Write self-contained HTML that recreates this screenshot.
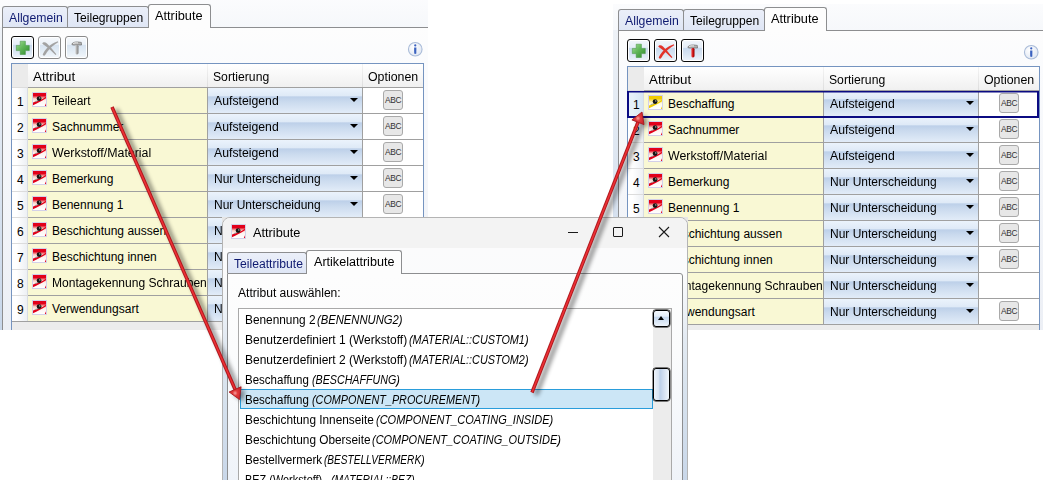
<!DOCTYPE html><html><head><meta charset="utf-8"><style>
*{margin:0;padding:0;box-sizing:border-box}
html,body{width:1043px;height:480px;overflow:hidden;background:#fff;font-family:"Liberation Sans", sans-serif;font-size:12px;color:#000}
.abs{position:absolute}
.crop{position:absolute;overflow:hidden}
.inner{position:absolute;width:440px;height:360px}
.topbg{background:linear-gradient(#fdfdfe,#f6f8fb)}
.leftbg{background:linear-gradient(#eef2f7,#c8d7ea 300px)}
.content{background:linear-gradient(#fdfdfd 0,#fafbfd 40px,#eceff5 300px);border-left:1px solid #8d8e90;border-top:1px solid #8d8e90}
.tab{background:linear-gradient(#ebeff9,#dfe6f5);border:1px solid #8d8e90;border-bottom:none;border-radius:3px 3px 0 0}
.tabsel{background:#fdfdfd;border:1px solid #8d8e90;border-bottom:none;border-radius:3px 3px 0 0}
.tabsel2{background:#fdfdfd}
.tt,.tx{position:absolute;white-space:nowrap;font-size:12px;line-height:14px;color:#000}
.navy{color:#0f1a70}
.ic{position:absolute}
.btn{width:23px;height:23px;border:1px solid #0a0a0a;border-radius:3px;box-shadow:inset 0 0 0 1px #fff;background:linear-gradient(#f2f6fb 0%,#e6eef8 35%,#c9daee 40%,#d9e5f3 70%,#eef4fb 100%)}
.btn.dis{border:1px solid #8a8a8a;background:linear-gradient(#f6f9fc 0%,#ecf2f9 35%,#d8e4f1 40%,#e4edf6 70%,#f3f7fb 100%)}
.gridbox{border:1px solid #7594c0;background:#fff}
.hdrnum{background:#ebebeb}
.hdr{background:linear-gradient(#ffffff,#f0f0f0)}
.hsep{background:linear-gradient(#f4f4f4,#dedede)}
.hline{background:#a0a0a0}
.hline2{background:#dcdcdc}
.num{background:linear-gradient(90deg,#ffffff 30%,#edf0f4 100%)}
.numsel{background:linear-gradient(90deg,#e6f0f9 30%,#d6e5f3 100%)}
.vsep{background:#a0a0a0}
.vsep2{background:#d8dce2}
.yel{background:#f9f8d4}
.blu{background:linear-gradient(#ebf3fc 0%,#dfeaf7 30%,#bdd0e9 36%,#cadaee 55%,#e2ecf8 100%)}
.wht{background:#fff}
.arr{width:0;height:0;border-left:4px solid transparent;border-right:4px solid transparent;border-top:4px solid #000}
.abc{width:20px;height:20px;border:1px solid #a9a9a9;border-radius:3px;background:#e7e7e7}
.abc span{position:absolute;left:1px;top:4px;font-size:8.4px;line-height:10px;color:#333;letter-spacing:-0.3px}
.bottomgray{background:#ececec}
.selbox{border:2px solid #0b0b82;border-top-width:1px;box-shadow:inset 0 1px 0 rgba(11,11,130,0.5)}
.dshadow{background:#e6e6e6}
.dlg{background:#f9fafc;border:1px solid #b4b4b4;border-radius:8px 8px 0 0;overflow:hidden}
.dtitle{background:#f3f3f3}
.dbody{background:linear-gradient(#fbfbfc 0,#fafbfc 30px,#e3eaf2 90px,#dae4ee 130px,#c9d7e9 233px)}
.tpanel{background:linear-gradient(#fdfdfd 0,#fbfcfd 80px,#eff3f9 207px);border:1px solid #8d8e90;border-radius:0 3px 0 0}
.lbox{background:#fff;border:1px solid #a9a9a9}
.lsel{background:#cce6f6;border:1px solid #2a9ddb}
.strack{background:#ececec}
.sbtn{border:1px solid #000;border-radius:3px;box-shadow:0 0 0 0.4px #000;background:linear-gradient(#f4f8fd 0%,#e3edf8 35%,#c5d7ee 42%,#d8e5f4 70%,#eef4fb 100%)}
.uparr{position:absolute;left:4px;top:5px;width:0;height:0;border-left:3.5px solid transparent;border-right:3.5px solid transparent;border-bottom:4px solid #000}
.sthumb{border:1px solid #000;border-radius:3px;box-shadow:0 0 0 0.4px #000;background:linear-gradient(90deg,#eef4fb 0%,#d8e4f3 30%,#bdd0e9 40%,#cfdcef 60%,#e6eef8 88%,#f4f8fc 100%)}
</style></head><body><svg width="0" height="0" style="position:absolute"><defs>
<linearGradient id="gr_e2001a" x1="0" y1="0" x2="0" y2="1">
<stop offset="0" stop-color="#e2001a"/><stop offset="0.2" stop-color="#e2001a"/>
<stop offset="0.42" stop-color="#f9c9bf"/><stop offset="0.6" stop-color="#fdf1ee"/><stop offset="1" stop-color="#ffffff"/></linearGradient>
<symbol id="ico_e2001a" viewBox="0 0 15 15">
<rect x="0" y="0" width="15" height="15" fill="#d3d0e8"/>
<rect x="1" y="1" width="13" height="13" fill="url(#gr_e2001a)"/>
<path d="M1 10.6 C5 9.6 10 7.6 14 4.8 L14 6.3 C10 9 5 11.6 1 13.2 Z" fill="#e2001a"/>
<path d="M12.8 14 L14 11.2 L14 14 Z" fill="#e2001a"/>
<path d="M2.6 9.6 L8.5 8.0" stroke="#777" stroke-width="0.6"/>
<circle cx="7.1" cy="6.6" r="2.4" fill="#141414"/>
<circle cx="7.8" cy="5.9" r="0.7" fill="#d0d0d0"/>
</symbol>
<linearGradient id="gr_f0cc00" x1="0" y1="0" x2="0" y2="1">
<stop offset="0" stop-color="#f0cc00"/><stop offset="0.2" stop-color="#f0cc00"/>
<stop offset="0.42" stop-color="#fbe9a0"/><stop offset="0.6" stop-color="#fffbe8"/><stop offset="1" stop-color="#ffffff"/></linearGradient>
<symbol id="ico_f0cc00" viewBox="0 0 15 15">
<rect x="0" y="0" width="15" height="15" fill="#d3d0e8"/>
<rect x="1" y="1" width="13" height="13" fill="url(#gr_f0cc00)"/>
<path d="M1 10.6 C5 9.6 10 7.6 14 4.8 L14 6.3 C10 9 5 11.6 1 13.2 Z" fill="#f0cc00"/>
<path d="M12.8 14 L14 11.2 L14 14 Z" fill="#f0cc00"/>
<path d="M2.6 9.6 L8.5 8.0" stroke="#777" stroke-width="0.6"/>
<circle cx="7.1" cy="6.6" r="2.4" fill="#141414"/>
<circle cx="7.8" cy="5.9" r="0.7" fill="#d0d0d0"/>
</symbol>
<linearGradient id="pg" x1="0" y1="0" x2="1" y2="1"><stop offset="0" stop-color="#a6dc98"/><stop offset="0.45" stop-color="#62b85a"/><stop offset="1" stop-color="#2f8a2d"/></linearGradient>
<radialGradient id="ig" cx="0.4" cy="0.35" r="0.7"><stop offset="0" stop-color="#ffffff"/><stop offset="1" stop-color="#dfe6f2"/></radialGradient>
</defs></svg>
<div class="crop" style="left:0px;top:0px;width:428px;height:330px">
<div class="inner" style="left:0px;top:0px">
<div class="abs topbg" style="left:-10px;top:-10px;width:460px;height:37px"></div>
<div class="abs leftbg" style="left:-10px;top:27px;width:12px;height:340px"></div>
<div class="abs content" style="left:2px;top:27px;width:440px;height:320px"></div>
<div class="abs tab" style="left:2px;top:6px;width:66px;height:21px"></div>
<span class="tt navy" style="left:9px;top:11px;transform:scaleX(1.0208);transform-origin:0 0">Allgemein</span>
<div class="abs tab" style="left:67px;top:6px;width:82px;height:21px"></div>
<span class="tt" style="left:74px;top:11px;transform:scaleX(1.0070);transform-origin:0 0">Teilegruppen</span>
<div class="abs tabsel" style="left:148px;top:4px;width:63px;height:24px"></div>
<span class="tt" style="left:155px;top:9px;transform:scaleX(1.0648);transform-origin:0 0">Attribute</span>
<div class="abs btn" style="left:11px;top:36px"><svg width="23" height="23" viewBox="0 0 23 23" style="position:absolute;left:-1px;top:-1px"><path d="M9.2 5.2 H14.4 V9.4 H18.3 V14.6 H14.4 V18.5 H9.2 V14.6 H5.3 V9.4 H9.2 Z" fill="url(#pg)" stroke="#3f8f3c" stroke-width="0.5" stroke-linejoin="round"/></svg></div><div class="abs btn dis" style="left:38px;top:36px"><svg width="23" height="23" viewBox="0 0 23 23" style="position:absolute;left:-1px;top:-1px"><path d="M4.2 7.6 C5 5.8 7 5.6 9 7.5 C12 10.5 15.5 14.5 18.4 18.2 L17.6 19 C14.5 16 11 12.5 7.5 10 C6 9 5 8.5 4.2 7.6 Z" fill="#a3a3a3"/><path d="M19.8 5.2 L20.2 6.2 C16 8.5 12 12 9.5 15.5 C8.5 17 7.5 18.5 6.8 19.5 C5.8 20 4.6 19.3 4.8 18.3 C6.5 14.5 9.5 11 12.5 9 C15 7.2 17.5 6 19.8 5.2 Z" fill="#a3a3a3"/></svg></div><div class="abs btn dis" style="left:65px;top:36px"><svg width="23" height="23" viewBox="0 0 23 23" style="position:absolute;left:-1px;top:-1px"><defs><linearGradient id="hgr" x1="0" y1="0" x2="1" y2="0"><stop offset="0" stop-color="#d8d8d8"/><stop offset="0.5" stop-color="#a8a8a8"/><stop offset="1" stop-color="#808080"/></linearGradient></defs><path d="M6.8 8.4 C7.3 6.4 10 5.8 13 6 L16.3 6.4 L16.5 9 L13 8.9 L9.5 9.1 C8.3 9.1 7.4 9 6.8 8.4 Z" fill="#b4b4b4" stroke="#5c5c5c" stroke-width="0.6"/><path d="M8 7.6 C9 6.8 11 6.7 13 6.9" stroke="#fff" stroke-width="0.8" fill="none"/><rect x="10.3" y="8.9" width="3.2" height="9.6" rx="1.4" fill="url(#hgr)"/></svg></div>
<svg class="abs" style="left:407px;top:41px" width="16" height="16" viewBox="0 0 16 16"><circle cx="8.25" cy="8.25" r="6.8" fill="url(#ig)" stroke="#a9bbd8" stroke-width="1.1"/><circle cx="8.25" cy="4.4" r="1.1" fill="#3b62c0"/><path d="M7.1 6.4 H9.4 L9.3 12.6 Q8.25 13.2 7.2 12.6 Z" fill="#3b62c0"/></svg>
<div class="abs gridbox" style="left:11px;top:63px;width:413px;height:300px"></div>
<div class="abs hdrnum" style="left:12px;top:64px;width:16px;height:23px"></div>
<div class="abs hdr" style="left:28px;top:64px;width:395px;height:23px"></div>
<div class="abs hsep" style="left:207px;top:64px;width:1px;height:23px"></div>
<div class="abs hsep" style="left:362px;top:64px;width:1px;height:23px"></div>
<span class="tx" style="left:33px;top:70px;transform:scaleX(1.1101);transform-origin:0 0">Attribut</span>
<span class="tx" style="left:213px;top:70px;transform:scaleX(1.0149);transform-origin:0 0">Sortierung</span>
<span class="tx" style="left:368px;top:70px;transform:scaleX(1.0307);transform-origin:0 0">Optionen</span>
<div class="abs hline" style="left:28px;top:87px;width:395px;height:1px"></div>
<div class="abs hline2" style="left:12px;top:87px;width:16px;height:1px"></div>
<div class="abs num" style="left:12px;top:88px;width:15px;height:25px"></div>
<div class="abs vsep2" style="left:27px;top:88px;width:1px;height:25px"></div>
<span class="tx" style="left:17px;top:95px">1</span>
<div class="abs yel" style="left:28px;top:88px;width:179px;height:25px"></div>
<div class="abs vsep" style="left:207px;top:88px;width:1px;height:25px"></div>
<div class="abs blu" style="left:208px;top:88px;width:154px;height:25px"></div>
<div class="abs vsep" style="left:362px;top:88px;width:1px;height:25px"></div>
<div class="abs wht" style="left:363px;top:88px;width:60px;height:25px"></div>
<svg class="ic" style="left:32px;top:92px" width="15" height="15" viewBox="0 0 15 15"><use href="#ico_e2001a"/></svg>
<span class="tx" style="left:52px;top:94px;transform:scaleX(1.0003);transform-origin:0 0">Teileart</span>
<span class="tx" style="left:214px;top:94px;transform:scaleX(1.0207);transform-origin:0 0">Aufsteigend</span>
<div class="abs arr" style="left:350px;top:98px"></div>
<div class="abs abc" style="left:383px;top:90px"><span>ABC</span></div>
<div class="abs hline" style="left:28px;top:113px;width:395px;height:1px"></div>
<div class="abs hline2" style="left:12px;top:113px;width:16px;height:1px"></div>
<div class="abs num" style="left:12px;top:114px;width:15px;height:25px"></div>
<div class="abs vsep2" style="left:27px;top:114px;width:1px;height:25px"></div>
<span class="tx" style="left:17px;top:121px">2</span>
<div class="abs yel" style="left:28px;top:114px;width:179px;height:25px"></div>
<div class="abs vsep" style="left:207px;top:114px;width:1px;height:25px"></div>
<div class="abs blu" style="left:208px;top:114px;width:154px;height:25px"></div>
<div class="abs vsep" style="left:362px;top:114px;width:1px;height:25px"></div>
<div class="abs wht" style="left:363px;top:114px;width:60px;height:25px"></div>
<svg class="ic" style="left:32px;top:118px" width="15" height="15" viewBox="0 0 15 15"><use href="#ico_e2001a"/></svg>
<span class="tx" style="left:52px;top:120px">Sachnummer</span>
<span class="tx" style="left:214px;top:120px;transform:scaleX(1.0207);transform-origin:0 0">Aufsteigend</span>
<div class="abs arr" style="left:350px;top:124px"></div>
<div class="abs abc" style="left:383px;top:116px"><span>ABC</span></div>
<div class="abs hline" style="left:28px;top:139px;width:395px;height:1px"></div>
<div class="abs hline2" style="left:12px;top:139px;width:16px;height:1px"></div>
<div class="abs num" style="left:12px;top:140px;width:15px;height:25px"></div>
<div class="abs vsep2" style="left:27px;top:140px;width:1px;height:25px"></div>
<span class="tx" style="left:17px;top:147px">3</span>
<div class="abs yel" style="left:28px;top:140px;width:179px;height:25px"></div>
<div class="abs vsep" style="left:207px;top:140px;width:1px;height:25px"></div>
<div class="abs blu" style="left:208px;top:140px;width:154px;height:25px"></div>
<div class="abs vsep" style="left:362px;top:140px;width:1px;height:25px"></div>
<div class="abs wht" style="left:363px;top:140px;width:60px;height:25px"></div>
<svg class="ic" style="left:32px;top:144px" width="15" height="15" viewBox="0 0 15 15"><use href="#ico_e2001a"/></svg>
<span class="tx" style="left:52px;top:146px;transform:scaleX(1.0305);transform-origin:0 0">Werkstoff/Material</span>
<span class="tx" style="left:214px;top:146px;transform:scaleX(1.0207);transform-origin:0 0">Aufsteigend</span>
<div class="abs arr" style="left:350px;top:150px"></div>
<div class="abs abc" style="left:383px;top:142px"><span>ABC</span></div>
<div class="abs hline" style="left:28px;top:165px;width:395px;height:1px"></div>
<div class="abs hline2" style="left:12px;top:165px;width:16px;height:1px"></div>
<div class="abs num" style="left:12px;top:166px;width:15px;height:25px"></div>
<div class="abs vsep2" style="left:27px;top:166px;width:1px;height:25px"></div>
<span class="tx" style="left:17px;top:173px">4</span>
<div class="abs yel" style="left:28px;top:166px;width:179px;height:25px"></div>
<div class="abs vsep" style="left:207px;top:166px;width:1px;height:25px"></div>
<div class="abs blu" style="left:208px;top:166px;width:154px;height:25px"></div>
<div class="abs vsep" style="left:362px;top:166px;width:1px;height:25px"></div>
<div class="abs wht" style="left:363px;top:166px;width:60px;height:25px"></div>
<svg class="ic" style="left:32px;top:170px" width="15" height="15" viewBox="0 0 15 15"><use href="#ico_e2001a"/></svg>
<span class="tx" style="left:52px;top:172px">Bemerkung</span>
<span class="tx" style="left:214px;top:172px;transform:scaleX(0.9997);transform-origin:0 0">Nur Unterscheidung</span>
<div class="abs arr" style="left:350px;top:176px"></div>
<div class="abs abc" style="left:383px;top:168px"><span>ABC</span></div>
<div class="abs hline" style="left:28px;top:191px;width:395px;height:1px"></div>
<div class="abs hline2" style="left:12px;top:191px;width:16px;height:1px"></div>
<div class="abs num" style="left:12px;top:192px;width:15px;height:25px"></div>
<div class="abs vsep2" style="left:27px;top:192px;width:1px;height:25px"></div>
<span class="tx" style="left:17px;top:199px">5</span>
<div class="abs yel" style="left:28px;top:192px;width:179px;height:25px"></div>
<div class="abs vsep" style="left:207px;top:192px;width:1px;height:25px"></div>
<div class="abs blu" style="left:208px;top:192px;width:154px;height:25px"></div>
<div class="abs vsep" style="left:362px;top:192px;width:1px;height:25px"></div>
<div class="abs wht" style="left:363px;top:192px;width:60px;height:25px"></div>
<svg class="ic" style="left:32px;top:196px" width="15" height="15" viewBox="0 0 15 15"><use href="#ico_e2001a"/></svg>
<span class="tx" style="left:52px;top:198px">Benennung 1</span>
<span class="tx" style="left:214px;top:198px;transform:scaleX(0.9997);transform-origin:0 0">Nur Unterscheidung</span>
<div class="abs arr" style="left:350px;top:202px"></div>
<div class="abs abc" style="left:383px;top:194px"><span>ABC</span></div>
<div class="abs hline" style="left:28px;top:217px;width:395px;height:1px"></div>
<div class="abs hline2" style="left:12px;top:217px;width:16px;height:1px"></div>
<div class="abs num" style="left:12px;top:218px;width:15px;height:25px"></div>
<div class="abs vsep2" style="left:27px;top:218px;width:1px;height:25px"></div>
<span class="tx" style="left:17px;top:225px">6</span>
<div class="abs yel" style="left:28px;top:218px;width:179px;height:25px"></div>
<div class="abs vsep" style="left:207px;top:218px;width:1px;height:25px"></div>
<div class="abs blu" style="left:208px;top:218px;width:154px;height:25px"></div>
<div class="abs vsep" style="left:362px;top:218px;width:1px;height:25px"></div>
<div class="abs wht" style="left:363px;top:218px;width:60px;height:25px"></div>
<svg class="ic" style="left:32px;top:222px" width="15" height="15" viewBox="0 0 15 15"><use href="#ico_e2001a"/></svg>
<span class="tx" style="left:52px;top:224px">Beschichtung aussen</span>
<span class="tx" style="left:214px;top:224px;transform:scaleX(0.9997);transform-origin:0 0">Nur Unterscheidung</span>
<div class="abs arr" style="left:350px;top:228px"></div>
<div class="abs abc" style="left:383px;top:220px"><span>ABC</span></div>
<div class="abs hline" style="left:28px;top:243px;width:395px;height:1px"></div>
<div class="abs hline2" style="left:12px;top:243px;width:16px;height:1px"></div>
<div class="abs num" style="left:12px;top:244px;width:15px;height:25px"></div>
<div class="abs vsep2" style="left:27px;top:244px;width:1px;height:25px"></div>
<span class="tx" style="left:17px;top:251px">7</span>
<div class="abs yel" style="left:28px;top:244px;width:179px;height:25px"></div>
<div class="abs vsep" style="left:207px;top:244px;width:1px;height:25px"></div>
<div class="abs blu" style="left:208px;top:244px;width:154px;height:25px"></div>
<div class="abs vsep" style="left:362px;top:244px;width:1px;height:25px"></div>
<div class="abs wht" style="left:363px;top:244px;width:60px;height:25px"></div>
<svg class="ic" style="left:32px;top:248px" width="15" height="15" viewBox="0 0 15 15"><use href="#ico_e2001a"/></svg>
<span class="tx" style="left:52px;top:250px">Beschichtung innen</span>
<span class="tx" style="left:214px;top:250px;transform:scaleX(0.9997);transform-origin:0 0">Nur Unterscheidung</span>
<div class="abs arr" style="left:350px;top:254px"></div>
<div class="abs abc" style="left:383px;top:246px"><span>ABC</span></div>
<div class="abs hline" style="left:28px;top:269px;width:395px;height:1px"></div>
<div class="abs hline2" style="left:12px;top:269px;width:16px;height:1px"></div>
<div class="abs num" style="left:12px;top:270px;width:15px;height:25px"></div>
<div class="abs vsep2" style="left:27px;top:270px;width:1px;height:25px"></div>
<span class="tx" style="left:17px;top:277px">8</span>
<div class="abs yel" style="left:28px;top:270px;width:179px;height:25px"></div>
<div class="abs vsep" style="left:207px;top:270px;width:1px;height:25px"></div>
<div class="abs blu" style="left:208px;top:270px;width:154px;height:25px"></div>
<div class="abs vsep" style="left:362px;top:270px;width:1px;height:25px"></div>
<div class="abs wht" style="left:363px;top:270px;width:60px;height:25px"></div>
<svg class="ic" style="left:32px;top:274px" width="15" height="15" viewBox="0 0 15 15"><use href="#ico_e2001a"/></svg>
<span class="tx" style="left:52px;top:276px;transform:scaleX(1.0044);transform-origin:0 0">Montagekennung Schrauben</span>
<span class="tx" style="left:214px;top:276px;transform:scaleX(0.9997);transform-origin:0 0">Nur Unterscheidung</span>
<div class="abs arr" style="left:350px;top:280px"></div>
<div class="abs abc" style="left:383px;top:272px"><span>ABC</span></div>
<div class="abs hline" style="left:28px;top:295px;width:395px;height:1px"></div>
<div class="abs hline2" style="left:12px;top:295px;width:16px;height:1px"></div>
<div class="abs num" style="left:12px;top:296px;width:15px;height:25px"></div>
<div class="abs vsep2" style="left:27px;top:296px;width:1px;height:25px"></div>
<span class="tx" style="left:17px;top:303px">9</span>
<div class="abs yel" style="left:28px;top:296px;width:179px;height:25px"></div>
<div class="abs vsep" style="left:207px;top:296px;width:1px;height:25px"></div>
<div class="abs blu" style="left:208px;top:296px;width:154px;height:25px"></div>
<div class="abs vsep" style="left:362px;top:296px;width:1px;height:25px"></div>
<div class="abs wht" style="left:363px;top:296px;width:60px;height:25px"></div>
<svg class="ic" style="left:32px;top:300px" width="15" height="15" viewBox="0 0 15 15"><use href="#ico_e2001a"/></svg>
<span class="tx" style="left:52px;top:302px">Verwendungsart</span>
<span class="tx" style="left:214px;top:302px;transform:scaleX(0.9997);transform-origin:0 0">Nur Unterscheidung</span>
<div class="abs arr" style="left:350px;top:306px"></div>
<div class="abs abc" style="left:383px;top:298px"><span>ABC</span></div>
<div class="abs hline" style="left:12px;top:321px;width:411px;height:1px"></div>
<div class="abs bottomgray" style="left:12px;top:322px;width:411px;height:40px"></div>
</div></div>
<div class="crop" style="left:613px;top:4px;width:430px;height:326px">
<div class="inner" style="left:3px;top:-1px">
<div class="abs topbg" style="left:-10px;top:-10px;width:460px;height:37px"></div>
<div class="abs leftbg" style="left:-10px;top:27px;width:12px;height:340px"></div>
<div class="abs content" style="left:2px;top:27px;width:440px;height:320px"></div>
<div class="abs tab" style="left:2px;top:6px;width:66px;height:21px"></div>
<span class="tt navy" style="left:9px;top:11px;transform:scaleX(1.0208);transform-origin:0 0">Allgemein</span>
<div class="abs tab" style="left:67px;top:6px;width:82px;height:21px"></div>
<span class="tt" style="left:74px;top:11px;transform:scaleX(1.0070);transform-origin:0 0">Teilegruppen</span>
<div class="abs tabsel" style="left:148px;top:4px;width:63px;height:24px"></div>
<span class="tt" style="left:155px;top:9px;transform:scaleX(1.0648);transform-origin:0 0">Attribute</span>
<div class="abs btn" style="left:11px;top:36px"><svg width="23" height="23" viewBox="0 0 23 23" style="position:absolute;left:-1px;top:-1px"><path d="M9.2 5.2 H14.4 V9.4 H18.3 V14.6 H14.4 V18.5 H9.2 V14.6 H5.3 V9.4 H9.2 Z" fill="url(#pg)" stroke="#3f8f3c" stroke-width="0.5" stroke-linejoin="round"/></svg></div><div class="abs btn" style="left:38px;top:36px"><svg width="23" height="23" viewBox="0 0 23 23" style="position:absolute;left:-1px;top:-1px"><path d="M4.2 7.6 C5 5.8 7 5.6 9 7.5 C12 10.5 15.5 14.5 18.4 18.2 L17.6 19 C14.5 16 11 12.5 7.5 10 C6 9 5 8.5 4.2 7.6 Z" fill="#e2332b"/><path d="M19.8 5.2 L20.2 6.2 C16 8.5 12 12 9.5 15.5 C8.5 17 7.5 18.5 6.8 19.5 C5.8 20 4.6 19.3 4.8 18.3 C6.5 14.5 9.5 11 12.5 9 C15 7.2 17.5 6 19.8 5.2 Z" fill="#e2332b"/></svg></div><div class="abs btn" style="left:65px;top:36px"><svg width="23" height="23" viewBox="0 0 23 23" style="position:absolute;left:-1px;top:-1px"><defs><linearGradient id="hr" x1="0" y1="0" x2="1" y2="0"><stop offset="0" stop-color="#f06060"/><stop offset="0.5" stop-color="#d01010"/><stop offset="1" stop-color="#900000"/></linearGradient></defs><path d="M6.8 8.4 C7.3 6.4 10 5.8 13 6 L16.3 6.4 L16.5 9 L13 8.9 L9.5 9.1 C8.3 9.1 7.4 9 6.8 8.4 Z" fill="#b4b4b4" stroke="#5c5c5c" stroke-width="0.6"/><path d="M8 7.6 C9 6.8 11 6.7 13 6.9" stroke="#fff" stroke-width="0.8" fill="none"/><rect x="10.3" y="8.9" width="3.2" height="9.6" rx="1.4" fill="url(#hr)"/></svg></div>
<svg class="abs" style="left:407px;top:41px" width="16" height="16" viewBox="0 0 16 16"><circle cx="8.25" cy="8.25" r="6.8" fill="url(#ig)" stroke="#a9bbd8" stroke-width="1.1"/><circle cx="8.25" cy="4.4" r="1.1" fill="#3b62c0"/><path d="M7.1 6.4 H9.4 L9.3 12.6 Q8.25 13.2 7.2 12.6 Z" fill="#3b62c0"/></svg>
<div class="abs gridbox" style="left:11px;top:63px;width:413px;height:300px"></div>
<div class="abs hdrnum" style="left:12px;top:64px;width:16px;height:23px"></div>
<div class="abs hdr" style="left:28px;top:64px;width:395px;height:23px"></div>
<div class="abs hsep" style="left:207px;top:64px;width:1px;height:23px"></div>
<div class="abs hsep" style="left:362px;top:64px;width:1px;height:23px"></div>
<span class="tx" style="left:33px;top:70px;transform:scaleX(1.1101);transform-origin:0 0">Attribut</span>
<span class="tx" style="left:213px;top:70px;transform:scaleX(1.0149);transform-origin:0 0">Sortierung</span>
<span class="tx" style="left:368px;top:70px;transform:scaleX(1.0307);transform-origin:0 0">Optionen</span>
<div class="abs hline" style="left:28px;top:87px;width:395px;height:1px"></div>
<div class="abs hline2" style="left:12px;top:87px;width:16px;height:1px"></div>
<div class="abs numsel" style="left:12px;top:88px;width:15px;height:25px"></div>
<div class="abs vsep2" style="left:27px;top:88px;width:1px;height:25px"></div>
<span class="tx" style="left:17px;top:95px">1</span>
<div class="abs yel" style="left:28px;top:88px;width:179px;height:25px"></div>
<div class="abs vsep" style="left:207px;top:88px;width:1px;height:25px"></div>
<div class="abs blu" style="left:208px;top:88px;width:154px;height:25px"></div>
<div class="abs vsep" style="left:362px;top:88px;width:1px;height:25px"></div>
<div class="abs wht" style="left:363px;top:88px;width:60px;height:25px"></div>
<svg class="ic" style="left:32px;top:92px" width="15" height="15" viewBox="0 0 15 15"><use href="#ico_f0cc00"/></svg>
<span class="tx" style="left:52px;top:94px">Beschaffung</span>
<span class="tx" style="left:214px;top:94px;transform:scaleX(1.0207);transform-origin:0 0">Aufsteigend</span>
<div class="abs arr" style="left:350px;top:98px"></div>
<div class="abs abc" style="left:383px;top:90px"><span>ABC</span></div>
<div class="abs hline" style="left:28px;top:113px;width:395px;height:1px"></div>
<div class="abs hline2" style="left:12px;top:113px;width:16px;height:1px"></div>
<div class="abs num" style="left:12px;top:114px;width:15px;height:25px"></div>
<div class="abs vsep2" style="left:27px;top:114px;width:1px;height:25px"></div>
<span class="tx" style="left:17px;top:121px">2</span>
<div class="abs yel" style="left:28px;top:114px;width:179px;height:25px"></div>
<div class="abs vsep" style="left:207px;top:114px;width:1px;height:25px"></div>
<div class="abs blu" style="left:208px;top:114px;width:154px;height:25px"></div>
<div class="abs vsep" style="left:362px;top:114px;width:1px;height:25px"></div>
<div class="abs wht" style="left:363px;top:114px;width:60px;height:25px"></div>
<svg class="ic" style="left:32px;top:118px" width="15" height="15" viewBox="0 0 15 15"><use href="#ico_e2001a"/></svg>
<span class="tx" style="left:52px;top:120px">Sachnummer</span>
<span class="tx" style="left:214px;top:120px;transform:scaleX(1.0207);transform-origin:0 0">Aufsteigend</span>
<div class="abs arr" style="left:350px;top:124px"></div>
<div class="abs abc" style="left:383px;top:116px"><span>ABC</span></div>
<div class="abs hline" style="left:28px;top:139px;width:395px;height:1px"></div>
<div class="abs hline2" style="left:12px;top:139px;width:16px;height:1px"></div>
<div class="abs num" style="left:12px;top:140px;width:15px;height:25px"></div>
<div class="abs vsep2" style="left:27px;top:140px;width:1px;height:25px"></div>
<span class="tx" style="left:17px;top:147px">3</span>
<div class="abs yel" style="left:28px;top:140px;width:179px;height:25px"></div>
<div class="abs vsep" style="left:207px;top:140px;width:1px;height:25px"></div>
<div class="abs blu" style="left:208px;top:140px;width:154px;height:25px"></div>
<div class="abs vsep" style="left:362px;top:140px;width:1px;height:25px"></div>
<div class="abs wht" style="left:363px;top:140px;width:60px;height:25px"></div>
<svg class="ic" style="left:32px;top:144px" width="15" height="15" viewBox="0 0 15 15"><use href="#ico_e2001a"/></svg>
<span class="tx" style="left:52px;top:146px;transform:scaleX(1.0305);transform-origin:0 0">Werkstoff/Material</span>
<span class="tx" style="left:214px;top:146px;transform:scaleX(1.0207);transform-origin:0 0">Aufsteigend</span>
<div class="abs arr" style="left:350px;top:150px"></div>
<div class="abs abc" style="left:383px;top:142px"><span>ABC</span></div>
<div class="abs hline" style="left:28px;top:165px;width:395px;height:1px"></div>
<div class="abs hline2" style="left:12px;top:165px;width:16px;height:1px"></div>
<div class="abs num" style="left:12px;top:166px;width:15px;height:25px"></div>
<div class="abs vsep2" style="left:27px;top:166px;width:1px;height:25px"></div>
<span class="tx" style="left:17px;top:173px">4</span>
<div class="abs yel" style="left:28px;top:166px;width:179px;height:25px"></div>
<div class="abs vsep" style="left:207px;top:166px;width:1px;height:25px"></div>
<div class="abs blu" style="left:208px;top:166px;width:154px;height:25px"></div>
<div class="abs vsep" style="left:362px;top:166px;width:1px;height:25px"></div>
<div class="abs wht" style="left:363px;top:166px;width:60px;height:25px"></div>
<svg class="ic" style="left:32px;top:170px" width="15" height="15" viewBox="0 0 15 15"><use href="#ico_e2001a"/></svg>
<span class="tx" style="left:52px;top:172px">Bemerkung</span>
<span class="tx" style="left:214px;top:172px;transform:scaleX(0.9997);transform-origin:0 0">Nur Unterscheidung</span>
<div class="abs arr" style="left:350px;top:176px"></div>
<div class="abs abc" style="left:383px;top:168px"><span>ABC</span></div>
<div class="abs hline" style="left:28px;top:191px;width:395px;height:1px"></div>
<div class="abs hline2" style="left:12px;top:191px;width:16px;height:1px"></div>
<div class="abs num" style="left:12px;top:192px;width:15px;height:25px"></div>
<div class="abs vsep2" style="left:27px;top:192px;width:1px;height:25px"></div>
<span class="tx" style="left:17px;top:199px">5</span>
<div class="abs yel" style="left:28px;top:192px;width:179px;height:25px"></div>
<div class="abs vsep" style="left:207px;top:192px;width:1px;height:25px"></div>
<div class="abs blu" style="left:208px;top:192px;width:154px;height:25px"></div>
<div class="abs vsep" style="left:362px;top:192px;width:1px;height:25px"></div>
<div class="abs wht" style="left:363px;top:192px;width:60px;height:25px"></div>
<svg class="ic" style="left:32px;top:196px" width="15" height="15" viewBox="0 0 15 15"><use href="#ico_e2001a"/></svg>
<span class="tx" style="left:52px;top:198px">Benennung 1</span>
<span class="tx" style="left:214px;top:198px;transform:scaleX(0.9997);transform-origin:0 0">Nur Unterscheidung</span>
<div class="abs arr" style="left:350px;top:202px"></div>
<div class="abs abc" style="left:383px;top:194px"><span>ABC</span></div>
<div class="abs hline" style="left:28px;top:217px;width:395px;height:1px"></div>
<div class="abs hline2" style="left:12px;top:217px;width:16px;height:1px"></div>
<div class="abs num" style="left:12px;top:218px;width:15px;height:25px"></div>
<div class="abs vsep2" style="left:27px;top:218px;width:1px;height:25px"></div>
<span class="tx" style="left:17px;top:225px">6</span>
<div class="abs yel" style="left:28px;top:218px;width:179px;height:25px"></div>
<div class="abs vsep" style="left:207px;top:218px;width:1px;height:25px"></div>
<div class="abs blu" style="left:208px;top:218px;width:154px;height:25px"></div>
<div class="abs vsep" style="left:362px;top:218px;width:1px;height:25px"></div>
<div class="abs wht" style="left:363px;top:218px;width:60px;height:25px"></div>
<svg class="ic" style="left:32px;top:222px" width="15" height="15" viewBox="0 0 15 15"><use href="#ico_e2001a"/></svg>
<span class="tx" style="left:52px;top:224px">Beschichtung aussen</span>
<span class="tx" style="left:214px;top:224px;transform:scaleX(0.9997);transform-origin:0 0">Nur Unterscheidung</span>
<div class="abs arr" style="left:350px;top:228px"></div>
<div class="abs abc" style="left:383px;top:220px"><span>ABC</span></div>
<div class="abs hline" style="left:28px;top:243px;width:395px;height:1px"></div>
<div class="abs hline2" style="left:12px;top:243px;width:16px;height:1px"></div>
<div class="abs num" style="left:12px;top:244px;width:15px;height:25px"></div>
<div class="abs vsep2" style="left:27px;top:244px;width:1px;height:25px"></div>
<span class="tx" style="left:17px;top:251px">7</span>
<div class="abs yel" style="left:28px;top:244px;width:179px;height:25px"></div>
<div class="abs vsep" style="left:207px;top:244px;width:1px;height:25px"></div>
<div class="abs blu" style="left:208px;top:244px;width:154px;height:25px"></div>
<div class="abs vsep" style="left:362px;top:244px;width:1px;height:25px"></div>
<div class="abs wht" style="left:363px;top:244px;width:60px;height:25px"></div>
<svg class="ic" style="left:32px;top:248px" width="15" height="15" viewBox="0 0 15 15"><use href="#ico_e2001a"/></svg>
<span class="tx" style="left:52px;top:250px">Beschichtung innen</span>
<span class="tx" style="left:214px;top:250px;transform:scaleX(0.9997);transform-origin:0 0">Nur Unterscheidung</span>
<div class="abs arr" style="left:350px;top:254px"></div>
<div class="abs abc" style="left:383px;top:246px"><span>ABC</span></div>
<div class="abs hline" style="left:28px;top:269px;width:395px;height:1px"></div>
<div class="abs hline2" style="left:12px;top:269px;width:16px;height:1px"></div>
<div class="abs num" style="left:12px;top:270px;width:15px;height:25px"></div>
<div class="abs vsep2" style="left:27px;top:270px;width:1px;height:25px"></div>
<span class="tx" style="left:17px;top:277px">8</span>
<div class="abs yel" style="left:28px;top:270px;width:179px;height:25px"></div>
<div class="abs vsep" style="left:207px;top:270px;width:1px;height:25px"></div>
<div class="abs blu" style="left:208px;top:270px;width:154px;height:25px"></div>
<div class="abs vsep" style="left:362px;top:270px;width:1px;height:25px"></div>
<div class="abs wht" style="left:363px;top:270px;width:60px;height:25px"></div>
<svg class="ic" style="left:32px;top:274px" width="15" height="15" viewBox="0 0 15 15"><use href="#ico_e2001a"/></svg>
<span class="tx" style="left:52px;top:276px;transform:scaleX(1.0044);transform-origin:0 0">Montagekennung Schrauben</span>
<span class="tx" style="left:214px;top:276px;transform:scaleX(0.9997);transform-origin:0 0">Nur Unterscheidung</span>
<div class="abs arr" style="left:350px;top:280px"></div>
<div class="abs hline" style="left:28px;top:295px;width:395px;height:1px"></div>
<div class="abs hline2" style="left:12px;top:295px;width:16px;height:1px"></div>
<div class="abs num" style="left:12px;top:296px;width:15px;height:25px"></div>
<div class="abs vsep2" style="left:27px;top:296px;width:1px;height:25px"></div>
<span class="tx" style="left:17px;top:303px">9</span>
<div class="abs yel" style="left:28px;top:296px;width:179px;height:25px"></div>
<div class="abs vsep" style="left:207px;top:296px;width:1px;height:25px"></div>
<div class="abs blu" style="left:208px;top:296px;width:154px;height:25px"></div>
<div class="abs vsep" style="left:362px;top:296px;width:1px;height:25px"></div>
<div class="abs wht" style="left:363px;top:296px;width:60px;height:25px"></div>
<svg class="ic" style="left:32px;top:300px" width="15" height="15" viewBox="0 0 15 15"><use href="#ico_e2001a"/></svg>
<span class="tx" style="left:52px;top:302px">Verwendungsart</span>
<span class="tx" style="left:214px;top:302px;transform:scaleX(0.9997);transform-origin:0 0">Nur Unterscheidung</span>
<div class="abs arr" style="left:350px;top:306px"></div>
<div class="abs abc" style="left:383px;top:298px"><span>ABC</span></div>
<div class="abs hline" style="left:12px;top:321px;width:411px;height:1px"></div>
<div class="abs bottomgray" style="left:12px;top:322px;width:411px;height:40px"></div>
<div class="abs selbox" style="left:11px;top:88px;width:412px;height:27px"></div>
</div></div>
<div class="abs dshadow" style="left:222px;top:217px;width:8px;height:8px"></div>
<div class="abs dshadow" style="left:680px;top:217px;width:8px;height:8px"></div>
<div class="abs dlg" style="left:222px;top:217px;width:466px;height:300px">
<div class="abs dtitle" style="left:0;top:0;width:466px;height:30px"></div>
</div>
<svg class="ic" style="left:231px;top:224px" width="15" height="15" viewBox="0 0 15 15"><use href="#ico_e2001a"/></svg>
<span class="tx" style="left:253px;top:226px;transform:scaleX(1.0614);transform-origin:0 0">Attribute</span>
<div class="abs" style="left:568px;top:232px;width:10px;height:1px;background:#1a1a1a"></div>
<div class="abs" style="left:613px;top:227px;width:10px;height:10px;border:1px solid #1a1a1a;border-radius:1px"></div>
<svg class="abs" style="left:658px;top:226px" width="12" height="12" viewBox="0 0 12 12"><path d="M1 1 L11 11 M11 1 L1 11" stroke="#1a1a1a" stroke-width="1.1"/></svg>
<div class="abs dbody" style="left:223px;top:248px;width:464px;height:240px"></div>
<div class="abs tab" style="left:227px;top:252px;width:80px;height:21px"></div>
<span class="tt navy" style="left:234px;top:257px;transform:scaleX(1.0125);transform-origin:0 0">Teileattribute</span>
<div class="abs tabsel" style="left:306px;top:250px;width:96px;height:24px"></div>
<span class="tt" style="left:314px;top:255px;transform:scaleX(1.0482);transform-origin:0 0">Artikelattribute</span>
<div class="abs tpanel" style="left:227px;top:273px;width:456px;height:240px"></div>
<div class="abs tabsel2" style="left:307px;top:273px;width:94px;height:2px"></div>
<span class="tx" style="left:238px;top:286px;transform:scaleX(1.0062);transform-origin:0 0">Attribut auswählen:</span>
<div class="abs lbox" style="left:238px;top:308px;width:434px;height:200px"></div>
<div class="abs lsel" style="left:240px;top:389px;width:413px;height:20px"></div>
<span class="tx" style="left:245px;top:313px;transform:scaleX(0.9873);transform-origin:0 0">Benennung 2</span>
<span class="tx" style="left:317px;top:313px;font-style:italic;transform:scaleX(0.9371);transform-origin:0 0">(BENENNUNG2)</span>
<span class="tx" style="left:245px;top:333px;transform:scaleX(0.9994);transform-origin:0 0">Benutzerdefiniert 1 (Werkstoff)</span>
<span class="tx" style="left:409px;top:333px;font-style:italic;transform:scaleX(0.9037);transform-origin:0 0">(MATERIAL::CUSTOM1)</span>
<span class="tx" style="left:245px;top:353px;transform:scaleX(0.9994);transform-origin:0 0">Benutzerdefiniert 2 (Werkstoff)</span>
<span class="tx" style="left:409px;top:353px;font-style:italic;transform:scaleX(0.9037);transform-origin:0 0">(MATERIAL::CUSTOM2)</span>
<span class="tx" style="left:245px;top:373px;transform:scaleX(0.9594);transform-origin:0 0">Beschaffung</span>
<span class="tx" style="left:312px;top:373px;font-style:italic;transform:scaleX(0.8898);transform-origin:0 0">(BESCHAFFUNG)</span>
<span class="tx" style="left:245px;top:393px;transform:scaleX(0.9594);transform-origin:0 0">Beschaffung</span>
<span class="tx" style="left:312px;top:393px;font-style:italic;transform:scaleX(0.9010);transform-origin:0 0">(COMPONENT_PROCUREMENT)</span>
<span class="tx" style="left:245px;top:413px;transform:scaleX(0.9850);transform-origin:0 0">Beschichtung Innenseite</span>
<span class="tx" style="left:376px;top:413px;font-style:italic;transform:scaleX(0.9175);transform-origin:0 0">(COMPONENT_COATING_INSIDE)</span>
<span class="tx" style="left:245px;top:433px;transform:scaleX(0.9850);transform-origin:0 0">Beschichtung Oberseite</span>
<span class="tx" style="left:372px;top:433px;font-style:italic;transform:scaleX(0.9149);transform-origin:0 0">(COMPONENT_COATING_OUTSIDE)</span>
<span class="tx" style="left:245px;top:453px;transform:scaleX(0.9728);transform-origin:0 0">Bestellvermerk</span>
<span class="tx" style="left:324px;top:453px;font-style:italic;transform:scaleX(0.8419);transform-origin:0 0">(BESTELLVERMERK)</span>
<span class="tx" style="left:245px;top:473px;transform:scaleX(0.9092);transform-origin:0 0">BEZ (Werkstoff)</span>
<span class="tx" style="left:331px;top:473px;font-style:italic;transform:scaleX(0.8618);transform-origin:0 0">(MATERIAL::BEZ)</span>
<div class="abs strack" style="left:653px;top:309px;width:18px;height:200px"></div>
<div class="abs sbtn" style="left:653px;top:310px;width:17px;height:17px"><div class="uparr"></div></div>
<div class="abs sthumb" style="left:653px;top:368px;width:17px;height:33px"></div>
<svg class="abs" style="left:0;top:0" width="1043" height="480" viewBox="0 0 1043 480"><defs><filter id="sh" x="-20%" y="-20%" width="140%" height="140%"><feGaussianBlur stdDeviation="2.2"/></filter><radialGradient id="ahg" cx="0.5" cy="0.5" r="0.6"><stop offset="0" stop-color="#f4a0a0"/><stop offset="0.35" stop-color="#e23a3c"/><stop offset="1" stop-color="#c8202a"/></radialGradient></defs><g transform="translate(4,2.5)" filter="url(#sh)" opacity="0.42"><path d="M112.0 107.0 L235.1 389.4" stroke="#000" stroke-width="4.6"/><path d="M239.5 399.5 L229.1 392.0 L241.1 386.8 Z" fill="#000"/><path d="M532.0 392.5 L638.0 122.2" stroke="#000" stroke-width="4.6"/><path d="M642.0 112.0 L644.0 124.6 L631.9 119.9 Z" fill="#000"/></g><path d="M112.0 107.0 L235.9 391.2" stroke="#b0191e" stroke-width="3.5" stroke-linecap="butt"/><path d="M112.2 107.6 L235.9 391.2" stroke="#ee3035" stroke-width="1.5"/><path d="M239.5 399.5 L229.1 392.0 L241.1 386.8 Z" fill="url(#ahg)" stroke="#a81a1e" stroke-width="0.9" stroke-linejoin="round"/><path d="M532.0 392.5 L638.7 120.4" stroke="#b0191e" stroke-width="3.5" stroke-linecap="butt"/><path d="M532.2 391.9 L638.7 120.4" stroke="#ee3035" stroke-width="1.5"/><path d="M642.0 112.0 L644.0 124.6 L631.9 119.9 Z" fill="url(#ahg)" stroke="#a81a1e" stroke-width="0.9" stroke-linejoin="round"/></svg></body></html>
